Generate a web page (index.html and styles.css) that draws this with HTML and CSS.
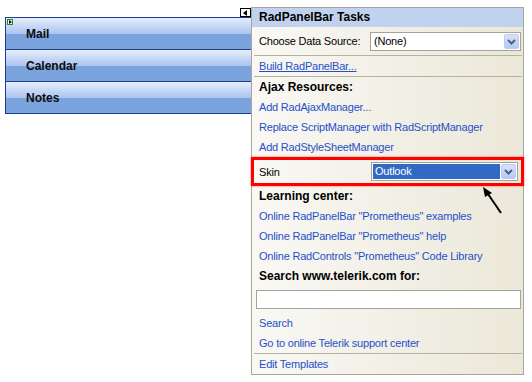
FILE: index.html
```html
<!DOCTYPE html>
<html lang="en">
<head>
    <meta charset="UTF-8">
    <title>RadPanelBar Tasks</title>
    <link rel="stylesheet" href="styles.css">
</head>
<body>
    <div class="page">
        <div class="designer">
            <div class="tag-row"><span class="smart-tag"></span></div>
            <div class="panelbar">
                <span class="glyph"></span>
                <div class="pb-item">Mail</div>
                <div class="pb-item">Calendar</div>
                <div class="pb-item">Notes</div>
            </div>
        </div>

        <div class="tasks">
            <div class="tasks-head">RadPanelBar Tasks</div>
            <div class="field-row">
                <span class="field-label">Choose Data Source:</span>
                <div class="combo source">
                    <span class="combo-text">(None)</span>
                    <span class="combo-btn"><svg width="15" height="15" viewBox="0 0 15 15"><polyline points="4,6 7.5,9.5 11,6" fill="none" stroke="#4d6185" stroke-width="2"/></svg></span>
                </div>
            </div>
            <div class="sep"></div>
            <a class="row link under">Build RadPanelBar...</a>
            <div class="sep"></div>
            <div class="row title">Ajax Resources:</div>
            <a class="row link">Add RadAjaxManager...</a>
            <a class="row link">Replace ScriptManager with RadScriptManager</a>
            <a class="row link">Add RadStyleSheetManager</a>
            <div class="skin-row">
                <span class="skin-label">Skin</span>
                <div class="combo skin">
                    <span class="combo-text selected">Outlook</span>
                    <span class="combo-btn"><svg width="15" height="15" viewBox="0 0 15 15"><polyline points="4,6 7.5,9.5 11,6" fill="none" stroke="#4d6185" stroke-width="2"/></svg></span>
                </div>
            </div>
            <div class="row title">Learning center:</div>
            <a class="row link">Online RadPanelBar "Prometheus" examples</a>
            <a class="row link">Online RadPanelBar "Prometheus" help</a>
            <a class="row link">Online RadControls "Prometheus" Code Library</a>
            <div class="row title">Search www.telerik.com for:</div>
            <input type="text" class="search-box">
            <a class="row link search-link">Search</a>
            <a class="row link">Go to online Telerik support center</a>
            <div class="sep"></div>
            <a class="row link">Edit Templates</a>
        </div>

        <!-- arrow pointing at the skin box -->
        <svg class="pointer" width="532" height="382" viewBox="0 0 532 382">
            <line x1="501" y1="213" x2="488" y2="194" stroke="#000" stroke-width="2"/>
            <polygon points="483,187 492,193 485,197" fill="#000"/>
        </svg>
    </div>
</body>
</html>
```

FILE: styles.css
```css
*{
    box-sizing: border-box;
    padding: 0;
    margin: 0;
}

body{
    background: #fff;
    font-family: "Liberation Sans", Arial, sans-serif;
    font-size: 11px;
    letter-spacing: -0.2px;
    color: #000;
}

.page{
    position: relative;
    display: flex;
    padding-top: 7px;
    width: 532px;
    height: 382px;
}

.designer{
    width: 246px;
    margin-left: 5px;
}

.tag-row{
    height: 10px;
    display: flex;
    justify-content: flex-end;
}
.smart-tag{
    position: relative;
    width: 11px;
    height: 9px;
    margin-top: 1px;
    border: 1px solid #000;
    background: #fff;
}
.smart-tag::after{
    content: "";
    position: absolute;
    left: 2px;
    top: 1px;
    border-right: 4px solid #000;
    border-top: 3px solid transparent;
    border-bottom: 3px solid transparent;
}

.panelbar{
    position: relative;
    border-top: 1px solid #1b3c8f;
    border-left: 1px solid #1b3c8f;
}
.glyph{
    position: absolute;
    left: 1px;
    top: 1px;
    width: 6px;
    height: 6px;
    border: 1px solid #1e8a1e;
    background: #fff;
}
.glyph::after{
    content: "";
    position: absolute;
    left: 1px;
    top: 0;
    border-left: 3px solid #000;
    border-top: 2px solid transparent;
    border-bottom: 2px solid transparent;
}
.pb-item{
    height: 32px;
    line-height: 33px;
    padding-left: 20px;
    font-weight: bold;
    font-size: 12px;
    letter-spacing: 0;
    color: #0c0c0c;
    border-bottom: 1px solid #1b3c8f;
    background: linear-gradient(#e6eefc 0, #c9d9f6 25%, #aac3ed 52%, #7ba4de 52%, #7ba4de 100%);
}

.tasks{
    width: 273px;
    height: 368px;
    border: 1px solid #a7a69b;
    background: linear-gradient(to right, #f9f8f4, #ebe8d9);
}

.tasks-head{
    height: 19px;
    line-height: 19px;
    padding-left: 7px;
    font-weight: bold;
    font-size: 12px;
    letter-spacing: 0;
    background: #c1d2ee;
}

.row{
    display: block;
    height: 20px;
    line-height: 20px;
    padding-left: 7px;
    white-space: nowrap;
}
.title{
    font-weight: bold;
    font-size: 12px;
    letter-spacing: 0;
}
.link{
    color: #1f50c9;
}
.under{
    text-decoration: underline;
}

.sep{
    height: 1px;
    margin: 0 1px 0 2px;
    background: #b5b2a3;
}

.field-row{
    height: 28px;
    display: flex;
    align-items: center;
    padding-left: 7px;
}
.field-label{
    width: 111px;
}

.combo{
    display: flex;
    align-items: center;
    height: 19px;
    padding: 1px;
    border: 1px solid #a3a39a;
    background: #fff;
}
.combo-text{
    flex: 1;
    height: 15px;
    line-height: 15px;
    padding-left: 2px;
}
.combo-text.selected{
    background: #316ac5;
    color: #fff;
}
.combo-btn{
    width: 15px;
    height: 15px;
    margin-left: 1px;
    border: 1px solid #b9cbf3;
    border-radius: 2px;
    background: linear-gradient(#d6e1fb, #b6c9f3);
}
.combo-btn svg{
    display: block;
    margin: -1px;
}
.source{
    width: 151px;
}

.skin-row{
    height: 29px;
    margin: 0 -1px;
    display: flex;
    align-items: center;
    padding-left: 5px;
    border: 3px solid #f00;
    box-shadow: 0 0 2px rgba(255, 0, 0, 0.6);
}
.skin-label{
    width: 112px;
}
.skin{
    width: 147px;
}

.search-box{
    display: block;
    width: 265px;
    height: 19px;
    margin: 4px 0 0 4px;
    border: 1px solid #a3a39a;
    background: #fff;
}
.search-link{
    margin-top: 4px;
}

.pointer{
    position: absolute;
    left: 0;
    top: 0;
    pointer-events: none;
}
```
